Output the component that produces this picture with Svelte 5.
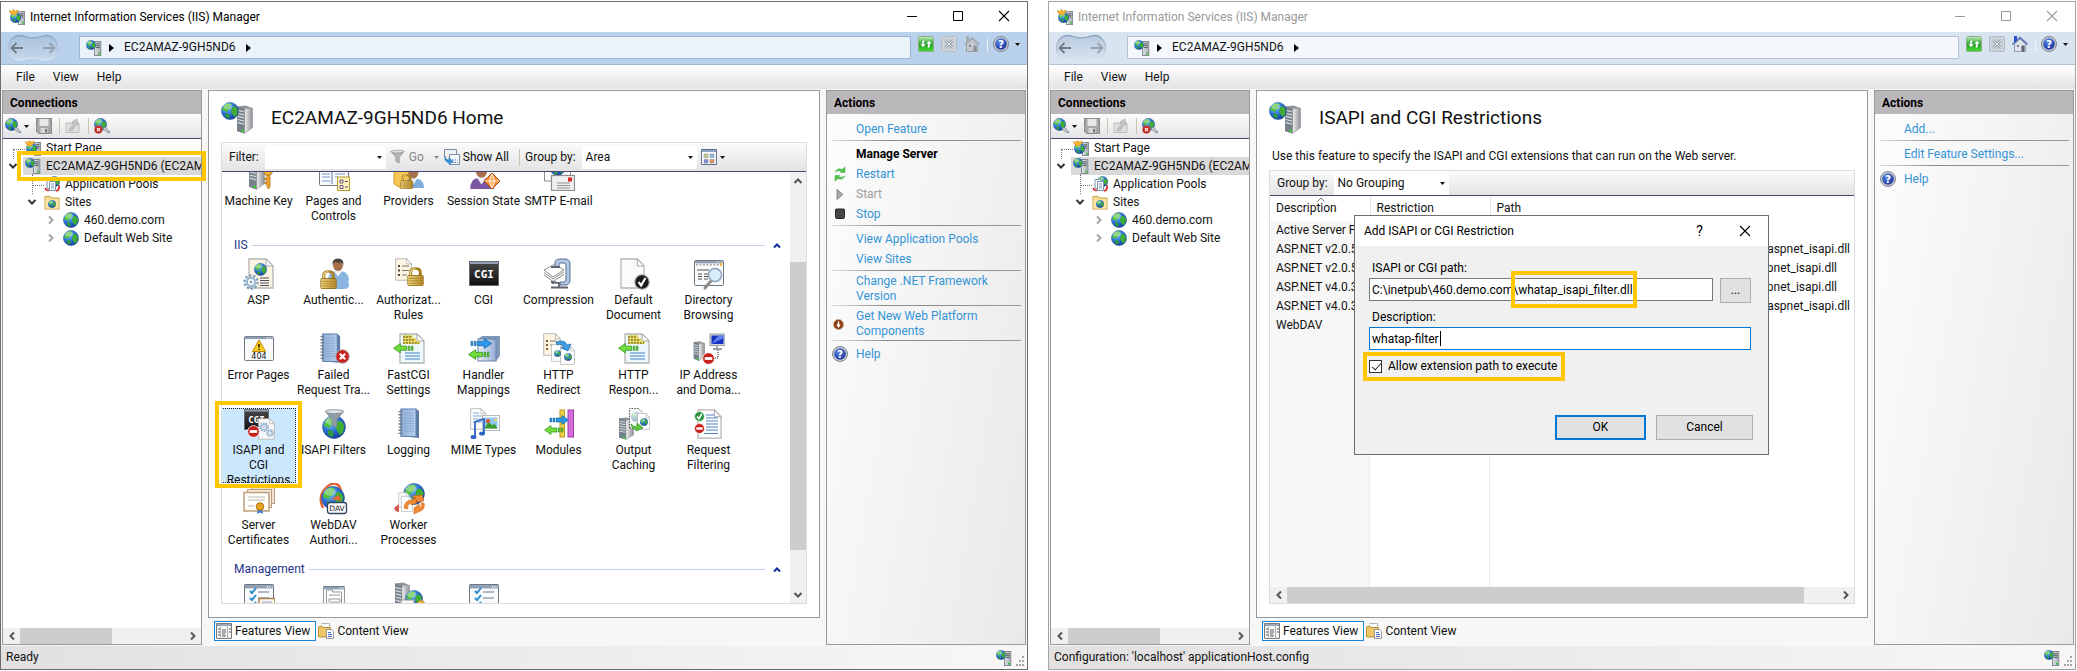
<script>
  const tree = [
    { label: 'Start Page', icon: 'start', level: 0, chev: '', dots: 'corner' },
    { label: 'EC2AMAZ-9GH5ND6 (EC2AMAZ-9GH5ND6\\Administrator)', icon: 'server', level: 0, chev: 'open', active: true },
    { label: 'Application Pools', icon: 'pools', level: 1, chev: '', dots: 'tee' },
    { label: 'Sites', icon: 'folder', level: 1, chev: 'open' },
    { label: '460.demo.com', icon: 'globe', level: 2, chev: 'closed' },
    { label: 'Default Web Site', icon: 'globe', level: 2, chev: 'closed' }
  ];

  const groups = [
    {
      title: '',
      items: [
        ['key', 'Machine Key'], ['pages', 'Pages and\nControls'], ['providers', 'Providers'],
        ['session', 'Session State'], ['smtp', 'SMTP E-mail']
      ]
    },
    {
      title: 'IIS',
      items: [
        ['asp', 'ASP'], ['auth', 'Authentic...'], ['authz', 'Authorizat...\nRules'], ['cgi', 'CGI'],
        ['compress', 'Compression'], ['defdoc', 'Default\nDocument'], ['dir', 'Directory\nBrowsing'],
        ['error', 'Error Pages'], ['failed', 'Failed\nRequest Tra...'], ['fastcgi', 'FastCGI\nSettings'],
        ['handler', 'Handler\nMappings'], ['redirect', 'HTTP\nRedirect'], ['fastcgi', 'HTTP\nRespon...'],
        ['ip', 'IP Address\nand Doma...'],
        ['isapi', 'ISAPI and\nCGI\nRestrictions'], ['filters', 'ISAPI Filters'], ['logging', 'Logging'],
        ['mime', 'MIME Types'], ['modules', 'Modules'], ['cache', 'Output\nCaching'], ['reqfilter', 'Request\nFiltering'],
        ['certs', 'Server\nCertificates'], ['webdav', 'WebDAV\nAuthori...'], ['worker', 'Worker\nProcesses']
      ]
    },
    { title: 'Management', items: [['config', ''], ['editor', ''], ['shared', ''], ['delegation', '']] }
  ];

  const rows = [
    ['Active Server Pages', '', ''],
    ['ASP.NET v2.0.50727', '\\aspnet_isapi.dll', ''],
    ['ASP.NET v2.0.50727', '\\aspnet_isapi.dll', 'short'],
    ['ASP.NET v4.0.30319', '\\aspnet_isapi.dll', 'short'],
    ['ASP.NET v4.0.30319', '\\aspnet_isapi.dll', ''],
    ['WebDAV', '', '']
  ];

  const homeActions = [
    [{ t: 'Open Feature' }],
    [{ t: 'Manage Server', kind: 'head' }, { t: 'Restart', icon: 'restart' }, { t: 'Start', icon: 'play', kind: 'off' }, { t: 'Stop', icon: 'stop' }],
    [{ t: 'View Application Pools' }, { t: 'View Sites' }],
    [{ t: 'Change .NET Framework Version' }],
    [{ t: 'Get New Web Platform Components', icon: 'wpi' }],
    [{ t: 'Help', icon: 'help' }]
  ];
  const cgiActions = [[{ t: 'Add...' }], [{ t: 'Edit Feature Settings...' }], [{ t: 'Help', icon: 'help' }]];

  let path = $state('C:\\inetpub\\460.demo.com\\whatap_isapi_filter.dll');
  let description = $state('whatap-filter');
  let allow = $state(true);
  let filter = $state('');
</script>

<!-- drawing parts -->
{#snippet globe(x, y, s)}
  <svg {x} {y} width={s} height={s} viewBox="0 0 16 16">
    <circle cx="8" cy="8" r="7.6" fill="url(#sea)" stroke="#2a56a0" stroke-width=".5" />
    <path d="M2 4.500Q4 1 8 1L9.500 2.500 8 4 8.500 5.500 6 7 5 9 3.500 8 1.200 7.500z" fill="#4fc03a" />
    <path d="M10.500 4L13.500 4.500 15 7.500 14 11.500 12 13.500 10.500 11 9 9 9.500 6z" fill="#3fae35" />
    <path d="M4 10L7 10.500 8 12.500 6.500 14.800 4 13z" fill="#2f9a3a" />
    <ellipse cx="6" cy="4" rx="4" ry="2.600" fill="#fff" opacity=".35" />
  </svg>
{/snippet}

{#snippet rack(x, y, h)}
  <svg {x} {y} width={h * 0.5} height={h} viewBox="0 0 8 16">
    <rect x=".5" y=".5" width="7" height="15" fill="url(#steel)" stroke="#7d858c" />
    <path d="M2 3h4M2 5h4M2 7h4" stroke="#4f565c" />
    <rect x="4.500" y="12.500" width="2" height="2" fill="#35c42c" />
  </svg>
{/snippet}

{#snippet tower(x, y, w, h)}
  <svg {x} {y} width={w} height={h} viewBox="0 0 16 28" preserveAspectRatio="none">
    <path d="M1 1.500L9 .5 15.500 3V22L8 27.500 1 25z" fill="#8e9499" />
    <path d="M8 3.500L15.500 3V22L8 27.500z" fill="url(#side)" stroke="#9da2a6" stroke-width=".5" />
    <path d="M1 1.500L8 3.500V27.500L1 25z" fill="#75808a" />
    <path d="M1.500 5l6 1.500M1.500 8l6 1.500M1.500 11l6 1.500M1.500 14l6 1.500M1.500 17l6 1.500" stroke="#d5dade" stroke-width="1.200" />
    <path d="M5 23.500l2.500.8v2L5 25.600z" fill="#39d02e" />
  </svg>
{/snippet}

{#snippet doc(x, y, w, h, fill)}
  <svg {x} {y} width={w} height={h} viewBox="0 0 26 31" preserveAspectRatio="none">
    <path d="M1 1h17l7 7v22H1z" {fill} stroke="#b4b4b4" stroke-width="1.300" />
    <path d="M18 1l7 7h-7z" fill="#fff" stroke="#a5a5a5" />
  </svg>
{/snippet}

{#snippet person(x, y, s, coat)}
  <svg {x} {y} width={s} height={s} viewBox="0 0 24 24">
    <path d="M2 23q0-9 7-10h6q8 1 8 10z" fill={coat} />
    <path d="M8 13l4 6 4-6-2-2h-4z" fill="#eef3f8" />
    <ellipse cx="12" cy="7" rx="5" ry="6" fill="#a8714c" />
    <path d="M6.500 7Q6 .5 12 .5T17.500 7L16 4.500Q12 5.500 9 3.500z" fill="#45413f" />
  </svg>
{/snippet}

{#snippet lock(x, y, s)}
  <svg {x} {y} width={s} height={s} viewBox="0 0 16 20" preserveAspectRatio="none">
    <path d="M4 10V5.500Q4 1.500 8 1.500T12 5.500V10" fill="none" stroke="#a98227" stroke-width="2.600" />
    <path d="M4 9V5.500Q4 2 8 1.800" fill="none" stroke="#f4dd92" />
    <rect x="1.500" y="9" width="13" height="10.500" rx="1" fill="url(#gold)" stroke="#8f6a17" stroke-width=".8" />
    <path d="M2.500 12h11M2.500 14.500h11M2.500 17h11" stroke="#a37a1e" stroke-width=".7" />
  </svg>
{/snippet}

{#snippet gear(x, y, s)}
  <svg {x} {y} width={s} height={s} viewBox="0 0 16 16">
    <circle cx="8" cy="8" r="6.600" fill="none" stroke="#7fa0bf" stroke-width="2.400" stroke-dasharray="2.300 1.850" />
    <circle cx="8" cy="8" r="4.200" fill="#fff" stroke="#9fbad2" stroke-width="2.400" />
    <circle cx="8" cy="8" r="1.200" fill="#6f8fb0" />
  </svg>
{/snippet}

{#snippet arrow(x, y, w, right)}
  <svg {x} {y} width={w} height={w / 2} viewBox="0 0 20 10">
    {#if right}
      <path d="M1 3h1.500v4H1zM4 3h1.500v4H4zM7 3h6V.5L19.500 5 13 9.500V7H7z" fill="#2a9ae8" stroke="#1464ae" stroke-width=".7" />
    {:else}
      <path d="M19 3h-1.500v4H19zM16 3h-1.500v4H16zM13 3H7V.5L.5 5 7 9.500V7h6z" fill="#6fdc3c" stroke="#2f8f1c" stroke-width=".7" />
    {/if}
  </svg>
{/snippet}

{#snippet badge(x, y, s, kind)}
  <svg {x} {y} width={s} height={s} viewBox="0 0 14 14">
    <circle cx="7" cy="7" r="6.300" fill={kind === 'ok' ? '#2f9440' : kind === 'tick' ? '#1c1c1c' : '#c9201c'} stroke={kind === 'x' || kind === 'tick' ? '#a8a8a8' : '#ffffff'} stroke-width=".9" />
    {#if kind === 'no'}
      <rect x="3" y="5.500" width="8" height="3" fill="#fff" />
    {:else if kind === 'x'}
      <path d="M4.500 4.500l5 5M9.500 4.500l-5 5" stroke="#fff" stroke-width="2" />
    {:else}
      <path d="M4 7l2.200 3L10 3.500" fill="none" stroke="#fff" stroke-width="1.900" />
    {/if}
  </svg>
{/snippet}

{#snippet frame(x, y, w, h)}
  <svg {x} {y} width={w} height={h} viewBox="0 0 30 26" preserveAspectRatio="none">
    <rect x=".5" y=".5" width="29" height="25" rx="1" fill="#f8fafc" stroke="#6d7681" />
    <path d="M1 2h28" stroke="#8fa0b6" stroke-width="2.400" />
    <path d="M23 2h1M25.500 2h1M28 2h.7" stroke="#fff" stroke-width="1.200" />
  </svg>
{/snippet}

{#snippet notebook(x, y, w, h)}
  <svg {x} {y} width={w} height={h} viewBox="0 0 23 30" preserveAspectRatio="none">
    <path d="M2.500 1H18l3 2v26L2.500 27z" fill="#5b7aa6" />
    <path d="M3 1h15v26.500H3z" fill="url(#note)" stroke="#5f7fab" />
    <path d="M6 5h10M6 7.500h10M6 10h10M6 12.500h10M6 15h10M6 17.500h10M6 20h10M6 22.500h10" stroke="#86a4cc" stroke-width=".8" />
    <path d="M.5 3.500h4M.5 6.500h4M.5 9.500h4M.5 12.500h4M.5 15.500h4M.5 18.500h4M.5 21.500h4M.5 24.500h4" stroke="#6f7c8c" stroke-width="1.300" />
  </svg>
{/snippet}

{#snippet funnel(x, y, s, c)}
  <svg {x} {y} width={s} height={s} viewBox="0 0 16 16">
    <path d="M1 2.500h14L9.800 9v6L6.200 13V9z" fill={c} stroke="#77828a" stroke-width=".6" />
    <ellipse cx="8" cy="2.800" rx="7" ry="1.500" fill="#dfe4e8" stroke="#77828a" stroke-width=".6" />
  </svg>
{/snippet}

{#snippet cgiBox(x, y, w, h)}
  <svg {x} {y} width={w} height={h} viewBox="0 0 30 25">
    <rect x=".5" y=".5" width="29" height="24" fill="url(#ink)" stroke="#626b76" />
    <path d="M1 2h28" stroke="#93a1b2" stroke-width="2" />
    <text x="15" y="17" text-anchor="middle" class="mono" font-size="11" fill="#fff">CGI</text>
  </svg>
{/snippet}

{#snippet feature(name)}
  <svg class="ico32" viewBox="0 0 32 32" aria-hidden="true">
    {#if name === 'key'}
      {@render tower(5, 1, 17, 30)}
      <circle cx="25" cy="12" r="4.500" fill="#f5b73c" stroke="#a86f11" />
      <path d="M24 16h3v12l-1.500 2-1.500-2v-3h-2v-2h2v-2h-2v-2h2z" fill="#f0a52c" stroke="#a86f11" stroke-width=".7" />
    {:else if name === 'pages'}
      {@render frame(1, 2, 30, 25)}
      <path d="M4 15h8M4 18h8M4 22h8M17 15h10M17 18h3" stroke="#7c98cc" stroke-width="1.200" />
      <path d="M14 5v20" stroke="#5d7ab4" />
      <rect x="19.500" y="18" width="12" height="13.500" fill="#fdf3b8" stroke="#b59a35" />
      <path d="M22 21h3v3h-3zM22 26.500h3v3h-3z" fill="none" stroke="#66548f" /><path d="M27 22.500h3M27 28h3" stroke="#66548f" />
    {:else if name === 'providers'}
      <path d="M1 2h15v26H6l-5-3z" fill="#f7c655" stroke="#d19a28" />
      {@render person(9, 7, 23, '#7faede')}
      {@render lock(6, 15, 15)}
    {:else if name === 'session'}
      {@render person(0, 4, 27, '#7b56a4')}
      <path d="M24 14l8 8-8 8-8-8z" fill="#f58b2e" stroke="#b84d0c" /><path d="M24 15l3 7-3 7-3-7zM17 22h14" fill="#fbb566" stroke="#fff" stroke-width=".8" />
    {:else if name === 'smtp'}
      <path d="M1.500 4v18h8M1.500 4h26v12" fill="none" stroke="#8d8d8d" />
      {@render globe(7, 2, 15)}
      <rect x="8.500" y="16.500" width="23" height="15" fill="#f0f0f0" stroke="#8c8c8c" stroke-width="1.200" />
      <rect x="25" y="18.500" width="4" height="4" fill="#e02424" /><path d="M14 24h13M14 26.500h13M14 29h13" stroke="#909090" />
    {:else if name === 'asp'}
      {@render doc(5, 0, 26, 31, '#fdf5e2')}
      {@render globe(11, 5, 13)}
      {@render gear(0, 16, 16)}
      <path d="M17 20h9M17 22.500h9M17 25h9M17 27.500h9" stroke="#4d4d68" stroke-width="1.200" />
    {:else if name === 'auth'}
      {@render person(8, 0, 24, '#8ab5e2')}
      <path d="M10 31q0-12 9-13h3q9 1 9 9 0 4-5 4z" fill="#8ab5e2" />
      {@render lock(1, 12, 19)}
    {:else if name === 'authz'}
      {@render doc(2, 0, 17, 23, '#fdf5e2')}
      <path d="M5 8h2M5 12.500h2M5 17h2" stroke="#444" stroke-width="2" /><path d="M9 8h7M9 12.500h7M9 17h5" stroke="#777" />
      {@render lock(13, 9, 19)}
    {:else if name === 'cgi'}
      {@render cgiBox(1, 3, 30, 25)}
    {:else if name === 'compress'}
      <path d="M1 12l11-6 9 6-11 7z" fill="#fdfdfd" stroke="#8a8a8a" /><path d="M1 14.500l9 6.500 11-7M1 17l9 6.500 11-7" fill="none" stroke="#8a8a8a" />
      <path d="M12 9V5q0-4 5-4h5q5 0 5 5v16q0 5-5 5h-5v-3h4q2 0 2-3V7q0-2-2-2h-4q-1 0-1 2v2z" fill="#b4c7e4" stroke="#5c6f8e" />
      <path d="M8 9h9M8 24l8 1v5M8 29.500h17M10 23v3" fill="none" stroke="#5b6470" stroke-width="1.800" />
    {:else if name === 'defdoc'}
      {@render doc(2, 0, 25, 31, '#fbfbfb')}
      {@render badge(16, 16, 16, 'tick')}
    {:else if name === 'dir'}
      {@render frame(1, 2, 30, 26)}
      <path d="M3 6.500h26" stroke="#a9a9a9" stroke-width="2" stroke-dasharray="2 1.500" /><path d="M27 5h2v3h-2z" fill="#f3b63c" />
      <path d="M4 12h12M5 16h4M11 16h5M5 18.500h4M11 18.500h5M5 21h4M11 21h4" stroke="#4e4e4e" stroke-width="1.100" />
      <path d="M18 23l-6 7" stroke="#8b8b8b" stroke-width="3" stroke-linecap="round" /><circle cx="22" cy="17" r="6.500" fill="#d8eefc" stroke="#8ea4b8" stroke-width="1.500" />
    {:else if name === 'error'}
      {@render frame(1, 3, 30, 25)}
      <path d="M16 7l6.500 11.500h-13z" fill="#ffcc24" stroke="#c38a00" stroke-linejoin="round" /><path d="M16 11v3.500M16 15.800v1.300" stroke="#2a2200" stroke-width="1.600" />
      <text x="16" y="26" text-anchor="middle" class="sans" font-size="8" fill="#111">404</text>
    {:else if name === 'failed'}
      {@render notebook(2, 0, 22, 31)}
      {@render badge(17, 16, 15, 'x')}
    {:else if name === 'fastcgi'}
      {@render doc(6, 0, 26, 31, '#eef8fc')}
      <path d="M10 3.500h10M10 6.500h13M10 9.500h17" stroke="#e7d03e" stroke-width="2.600" /><path d="M10 4h9M10 7h12M10 10h16" stroke="#55501c" stroke-dasharray="2 1" />
      {@render arrow(0, 10, 21, false)}
      <path d="M12 20h15M12 23h15M12 26h15" stroke="#3f83c7" stroke-width="1.200" />
    {:else if name === 'handler'}
      <path d="M10 6l4-3h18v20l-4 5H10z" fill="#8198bc" /><rect x="10" y="6" width="18" height="22" fill="url(#box)" stroke="#6982aa" />
      {@render arrow(2, 5, 22, true)}
      {@render arrow(0, 16, 22, false)}
    {:else if name === 'redirect'}
      {@render doc(0, 0, 18, 23, '#fdf5e2')}
      <path d="M3 8h2M3 12h2M3 16h2" stroke="#8a5a20" stroke-width="2" /><path d="M7 8h6M7 12h4" stroke="#777" />
      {@render doc(8, 11, 14, 18, '#fff')}
      {@render doc(17, 13, 15, 19, '#fff')}
      {@render globe(11, 17, 7)}
      {@render globe(21, 20, 8)}
      <path d="M13 9q9-3 11 3l4-1-3 7-7-3 3-1q-2-4-7-2z" fill="#3da0e4" stroke="#1d67ab" stroke-width=".7" />
    {:else if name === 'ip'}
      {@render tower(0, 8, 12, 20)}
      <rect x="17" y="1" width="15" height="11.500" fill="#d3d6d8" stroke="#9a9fa3" /><rect x="18.500" y="2.500" width="12" height="8.500" fill="#1931c4" /><path d="M18.500 11l7-8.500h5V5z" fill="#5d86ee" /><path d="M24 13v2.500M20 16h9" stroke="#9a9fa3" stroke-width="1.800" />
      <path d="M25 17v8h-4" fill="none" stroke="#222" stroke-dasharray="1 1" />
      {@render badge(9, 19, 13, 'no')}
    {:else if name === 'isapi'}
      {@render cgiBox(1, 1, 25, 21)}
      {@render doc(15, 10, 17, 22, '#f8f8fb')}
      {@render gear(16, 14, 10)}
      {@render gear(23, 21, 8)}
      {@render badge(4, 17, 13, 'no')}
    {:else if name === 'filters'}
      {@render globe(4, 7, 24)}
      {@render funnel(6, 0, 21, '#909ca4')}
    {:else if name === 'logging'}
      {@render notebook(5, 0, 23, 31)}
    {:else if name === 'mime'}
      {@render doc(2, 0, 16, 22, '#fdfdff')}
      <path d="M5 5h6M5 8h9M5 11h9M5 14h9" stroke="#7fa8d8" />
      <rect x="14.500" y="7.500" width="17" height="15" fill="#fff" stroke="#b9b9b9" /><rect x="16.500" y="9.500" width="13" height="11" fill="#8cc8f4" /><path d="M16.500 20.500l4-7 4 4 2-2 3 5z" fill="#3b9d2d" /><circle cx="20" cy="13" r="2" fill="#e0502b" /><path d="M26 11h3v2h-3z" fill="#f7d04c" />
      <path d="M7 29V14l9-3v14" fill="none" stroke="#2f66c4" stroke-width="1.800" /><ellipse cx="5.500" cy="29" rx="3" ry="2" fill="#2f66c4" /><ellipse cx="14" cy="25.500" rx="3" ry="2" fill="#2f66c4" />
    {:else if name === 'modules'}
      <rect x="17" y="2" width="4.500" height="27" fill="#f0d24c" stroke="#b99a1d" /><rect x="25" y="2" width="5.500" height="27" fill="#d76cdc" stroke="#9c3da4" />
      {@render arrow(6, 7, 20, true)}
      {@render arrow(1, 17, 20, false)}
    {:else if name === 'cache'}
      {@render tower(0, 9, 16, 23)}
      <path d="M11.500 20V.5h9l5 5v14z" fill="#fafafa" stroke="#555" stroke-dasharray="1.500 1.200" />
      <g opacity=".4">{@render globe(13, 4, 10)}</g>
      {@render doc(19, 5, 13, 17, '#fdfdfd')}
      {@render globe(22, 10, 8)}
      <path d="M13 16q3 4 6 2v-3l6 5-7 3v-2q-4 1-5-5z" fill="#5fcb3c" stroke="#2c8a1d" stroke-width=".7" />
    {:else if name === 'reqfilter'}
      {@render doc(4, 1, 25, 30, '#fdfdff')}
      <path d="M13 7h8M13 10h12M13 13h12M13 16h12M13 19h12M13 22h12M11 25.500h14" stroke="#4f84c4" stroke-width="1.100" />
      {@render badge(1, 3, 11, 'ok')}
      {@render badge(1, 15, 11, 'no')}
    {:else if name === 'certs'}
      <rect x="8.500" y="3.500" width="23" height="17" fill="#efe2cf" stroke="#b59c7c" /><rect x="4.500" y="6.500" width="24" height="18" fill="#f5ebdc" stroke="#b59c7c" />
      <rect x="1" y="9.500" width="25" height="18.500" fill="#fffdf8" stroke="#c0a582" stroke-width="1.600" /><path d="M5 14h17M5 17h17M5 23h6" stroke="#b9b9b9" />
      <path d="M15 25l-1 6 3-1.500 3 1.500-1-6z" fill="#3d7fd8" /><circle cx="17" cy="23.500" r="3.800" fill="#e8a31f" stroke="#a97411" />
    {:else if name === 'webdav'}
      <path d="M5 25Q-2 10 13 1q9-2 10 8" fill="none" stroke="#e2683a" stroke-width="2.600" />
      {@render globe(3, 3, 24)}
      <path d="M13 16l8-4 2 6z" fill="#e2683a" />
      <rect x="9.500" y="19.500" width="19" height="11" rx="2.500" fill="#fff" stroke="#2e4560" stroke-width="1.300" />
      <text x="19" y="28" text-anchor="middle" class="sans" font-size="7.500" fill="#111">DAV</text>
    {:else if name === 'worker'}
      {@render globe(10, 0, 22)}
      {@render doc(5, 9, 12, 16, '#f4f4f4')}
      {@render doc(8, 13, 12, 16, '#fff')}
      <path d="M1 25l5-4v8q-4 0-5-4z" fill="#d4564f" />
      <path d="M11 25q1-9 9-8l2-3 2 6-6 2v-2q-4 1-3 6zM19 13l10-1 2 6-6 1zM31 20q2 7-6 9l-4 2v-6l5-4 1 4q2-2 1-5z" fill="#ef8a32" stroke="#c05a13" stroke-width=".5" />
    {:else if name === 'config' || name === 'delegation'}
      {@render frame(1, 2, 30, 36)}
      <path d="M7 9l2 2 4-5M7 16l2 2 4-5M7 23l2 2 4-5" fill="none" stroke="#2a8ccc" stroke-width="2" /><path d="M15 10h11M15 16h11M15 22h11" stroke="#6f7391" />
      {#if name === 'config'}<rect x="16" y="16.500" width="16" height="14" fill="#fffaf0" stroke="#a8824f" stroke-width="1.500" /><path d="M19 20h10M19 23h10" stroke="#9a9ad0" />{/if}
    {:else if name === 'editor'}
      {@render frame(5, 4, 22, 28)}
      <path d="M8.500 9v-1h6v2h9v20h-15z" fill="#fff" stroke="#999" /><path d="M11 13h11M11 17h11v3H11zM14 25h8" fill="none" stroke="#999" /><path d="M10.500 24h2v2h-2z" fill="#24b0d8" />
    {:else if name === 'shared'}
      {@render tower(1, 0, 16, 30)}
      {@render globe(12, 8, 18)}
      <rect x="8" y="18" width="13" height="12" fill="#f8f8f8" stroke="#999" />
      <circle cx="28" cy="22" r="3.500" fill="#eebf4c" stroke="#b28b26" />
    {/if}
  </svg>
{/snippet}

{#snippet small(name, off)}
  <svg class="ico16" viewBox="0 0 16 16" aria-hidden="true">
    {#if name === 'start'}
      {@render rack(9, 2, 14)}
      {@render globe(1, 3, 11)}
      <path d="M0 1.500l3 1 1.500-2.300L6 2.300 9 1 8 4.500 5.500 6 2 5z" fill="#f7b52c" stroke="#d08a10" stroke-width=".5" />
    {:else if name === 'server'}
      {@render rack(8, 1, 15)}
      {@render globe(0, 0, 10)}
    {:else if name === 'pools'}
      {@render globe(5, 0, 11)}
      <path d="M3 3.500h6v9H3z" fill="#fff" stroke="#7a94b4" /><path d="M5.500 5.500h6v9h-6z" fill="#fff" stroke="#7a94b4" /><path d="M7 8h3M7 10h3M7 12h3" stroke="#7a94b4" /><path d="M1 12q2 3.500 4 2M15 9q1 5-3 6" fill="none" stroke="#d33a33" stroke-width="1.800" />
    {:else if name === 'folder'}
      <path d="M1 2.500h5l1 1.500h8v11H1z" fill="#f9dc8c" stroke="#c69f42" /><path d="M1.500 5.500h13v9h-13z" fill="#fbe6a8" />
      {@render globe(4, 6, 8)}
    {:else if name === 'globe'}
      {@render globe(0, 0, 16)}
    {:else if name === 'connect' || name === 'disconnect'}
      {@render globe(0, 0, 13)}
      <path d="M9 11l2-2 4 4 1 2-3-1z" fill="#c9d2da" stroke="#71808c" stroke-width=".8" />
      {#if name === 'disconnect'}{@render badge(0, 7, 9, 'x')}{/if}
    {:else if name === 'save'}
      <path d="M.5.5h15v15h-13l-2-2z" fill="#a6a6a6" stroke="#8a8a8a" /><path d="M3.500 1h9v7h-9z" fill="#e8e8e8" /><path d="M4.500 10h7v5h-7z" fill="#d8d8d8" /><path d="M9 11h2v3.500H9z" fill="#777" />
    {:else if name === 'up'}
      <path d="M1 5h13v9.500H1z" fill="#dedede" stroke="#bdbdbd" /><path d="M4 12l5-7-2-1 5-3 1 6-2-1-4 7z" fill="#c6c6c6" stroke="#a5a5a5" stroke-width=".6" />
    {:else if name === 'refresh'}
      <rect x=".5" y=".5" width="15" height="15" rx="1" fill="url(#lime)" stroke="#8fae8a" /><path d="M6.800 2.500L4 5.500V8H2l3 3.500L8 8H6zM9.200 13.500L12 10.500V8h2l-3-3.500L8 8h2z" fill="#fff" stroke="#0d6f17" stroke-width=".3" />
    {:else if name === 'cancel'}
      <rect x=".5" y=".5" width="15" height="15" rx="1" fill="#ccd3da" stroke="#b4bcc4" /><path d="M4 4l8 8M12 4l-8 8" stroke="#9aa3ab" stroke-width="2.500" /><path d="M4 4l8 8M12 4l-8 8" stroke="#e6eaee" />
    {:else if name === 'home'}
      <path d="M2.500 8v7.500h11V8L8 3z" fill={off ? '#c3c8cd' : '#dfe3ea'} stroke="#979da6" /><path d="M.5 8.500L8 1.500l7.500 7" fill="none" stroke={off ? '#a7adb4' : '#5a74b8'} stroke-width="1.600" /><path d="M2 0h3v4.500L2 7z" fill={off ? '#a7adb4' : '#2d4fc8'} /><path d="M5 9h2v2H5z" fill="#7c8390" /><path d="M9.500 9.500h3v6h-3z" fill={off ? '#8b9199' : '#5b6272'} />
    {:else if name === 'help'}
      <circle cx="8" cy="8" r="7.500" fill="#c9cdd3" stroke="#7f858f" /><circle cx="8" cy="8" r="5.800" fill="url(#navy)" /><text x="8" y="11.800" text-anchor="middle" class="sans" font-weight="700" font-size="10.500" fill="#fff">?</text>
    {:else if name === 'restart'}
      <path d="M3 6q3-5 7-2.500L13 1v5.500H8L9.500 5Q6 4 3 6z" fill="#4fc545" stroke="#2e9a2c" stroke-width=".4" /><path d="M13 10q-3 5-7 2.500L3 15V9.500h5L6.500 11q3.500 1 6.500-1z" fill="#4fc545" stroke="#2e9a2c" stroke-width=".4" />
    {:else if name === 'play'}
      <path d="M5 3.500l6 5-6 5z" fill="#a9a9a9" stroke="#8b8b8b" />
    {:else if name === 'stop'}
      <rect x="3.500" y="3" width="9" height="9.500" rx="1" fill="#454545" stroke="#2a2a2a" />
    {:else if name === 'wpi'}
      <circle cx="6.500" cy="8.500" r="5" fill="#8a3a0c" stroke="#c9a78e" /><path d="M6.500 4.500q1 2 .8 4h1.500l-2.300 3.500L4.200 8.500h1.500q-.2-2 .8-4z" fill="#fff" />
    {:else if name === 'show'}
      <path d="M.5 2.500v-2h12v5" fill="#eef3fa" stroke="#7c8ba0" /><path d="M.5 1v7" stroke="#7c8ba0" /><path d="M5.500 5.500h10v10h-10z" fill="#f5f8fc" stroke="#7c8ba0" /><path d="M8 11h5.500M8 13.500h5.500" stroke="#5b79b8" stroke-dasharray="1.500 1" /><path d="M1 7q0 4 4 4V8.500l4 4-4 3v-2Q0 13 1 7z" fill="#2f96dc" stroke="#1763a0" stroke-width=".5" />
    {:else if name === 'tiles'}
      <path d="M.5.5h15v15H.5z" fill="#fdfdfd" stroke="#5f7088" /><path d="M1 2h14" stroke="#8da5c4" stroke-width="2" /><path d="M3 5h4v3.500H3z" fill="#c7d28a" stroke="#888" stroke-width=".6" /><path d="M9 5h4v3.500H9z" fill="#8cc1ea" stroke="#888" stroke-width=".6" /><path d="M3 10.500h4V14H3z" fill="#7d8be0" stroke="#888" stroke-width=".6" /><path d="M9 10.500h4V14H9z" fill="#f0945c" stroke="#888" stroke-width=".6" />
    {:else if name === 'fview'}
      <path d="M.5.5h15v15H.5z" fill="#f5f5f5" stroke="#7a7a7a" /><path d="M1 2h14" stroke="#9aa8b8" stroke-width="2" /><path d="M4.500 3.500v12M11.500 3.500v12" stroke="#b0b0b0" /><path d="M2 6h2M2 9h2M2 12h2M6 7h4M6 9h4M6 11h3M6 13h4M13 6h2M13 9h2" stroke="#55606c" />
    {:else if name === 'cview'}
      <path d="M3.500.5h8v5" fill="#fff" stroke="#b5b5b5" /><path d="M.5 14V4l3-1 2 1.500h7V14z" fill="#edc667" stroke="#bd923a" /><path d="M8.500 6.500h5l2 2v7h-7z" fill="#fff" stroke="#9a9a9a" /><path d="M10 9.500h3M10 11.500h4M10 13.500h4" stroke="#3f74c4" />
    {/if}
  </svg>
{/snippet}

{#snippet caret()}
  <svg class="caret" viewBox="0 0 5 3" aria-hidden="true"><path d="M0 0h5L2.500 3z" fill="currentColor" /></svg>
{/snippet}

{#snippet bread()}
  <svg class="bread" viewBox="0 0 5 8" aria-hidden="true"><path d="M0 0l5 4-5 4z" fill="#000" /></svg>
{/snippet}

{#snippet chevron(dir)}
  <svg class="chev" viewBox="0 0 10 10" aria-hidden="true">
    <path d={{ left: 'M7 1.500L3.500 5 7 8.500', right: 'M3 1.500L6.500 5 3 8.500', up: 'M1.500 7L5 3.500 8.500 7', down: 'M1.500 3L5 6.500 8.500 3' }[dir]} fill="none" stroke="currentColor" stroke-width="2" />
  </svg>
{/snippet}

{#snippet scrollbar(cls, before, after)}
  <div class={['bar', cls]}>
    <button aria-label="Scroll back">{@render chevron(before)}</button>
    <div class="track"><div class="thumb"></div></div>
    <button aria-label="Scroll forward">{@render chevron(after)}</button>
  </div>
{/snippet}

{#snippet bigServer()}
  <svg class="big" viewBox="0 0 32 32" aria-hidden="true">
    {@render tower(15, 3, 17, 29)}
    {@render globe(0, 0, 18)}
  </svg>
{/snippet}

{#snippet shell(title, actions, status, inactive, marked, content)}
  <section class="window" class:inactive>
    <header class="titlebar">
      {@render small('start')}
      <span class="caption">Internet Information Services (IIS) Manager</span>
      <button aria-label="Minimize"><svg viewBox="0 0 10 10"><path d="M0 5.500h10" stroke="currentColor" /></svg></button>
      <button aria-label="Maximize"><svg viewBox="0 0 10 10"><path d="M.5.5h9v9h-9z" fill="none" stroke="currentColor" /></svg></button>
      <button aria-label="Close"><svg viewBox="0 0 10 10"><path d="M0 0l10 10M10 0L0 10" stroke="currentColor" stroke-width="1.100" /></svg></button>
    </header>

    <div class="nav">
      <svg class="travel" viewBox="0 0 56 28" aria-hidden="true">
        <path d="M13 1.500C20 1.500 22 4 28 4S38 1.500 43 1.500A12 12.500 0 0 1 43 26C37 26 34 24 28 24S20 26 13 26A12 12.500 0 0 1 13 1.500z" fill="url(#pill)" fill-opacity=".45" stroke="url(#rim)" stroke-width="1.400" />
        <path d="M18 14H7M11.500 9L6.500 14l5 5" fill="none" stroke="#6f7a86" stroke-width="1.800" />
        <path d="M38 14h11M44.500 9l5 5-5 5" fill="none" stroke="#95a1ae" stroke-width="1.800" />
      </svg>
      <div class="address">
        {@render small('server')}{@render bread()}<span>EC2AMAZ-9GH5ND6</span>{@render bread()}
      </div>
      <div class="tools">
        <button aria-label="Refresh">{@render small('refresh')}</button>
        <button aria-label="Cancel">{@render small('cancel')}</button>
        <button aria-label="Home">{@render small('home', !inactive)}</button>
        <i></i>
        <button aria-label="Help menu">{@render small('help')}{@render caret()}</button>
      </div>
    </div>

    <nav class="menu"><button>File</button><button>View</button><button>Help</button></nav>

    <div class="body">
      <aside class="panel connections">
        <h2>Connections</h2>
        <div class="ctools">
          <button aria-label="Connect">{@render small('connect')}{@render caret()}</button>
          <button aria-label="Save">{@render small('save')}</button><i></i>
          <button aria-label="Up">{@render small('up')}</button><i></i>
          <button aria-label="Disconnect">{@render small('disconnect')}</button>
        </div>
        <ul class="tree">
          {#each tree as n}
            <li class="l{n.level}">
              <span class={['twist', n.chev, n.dots]}>
                {#if n.chev}{@render chevron(n.chev === 'open' ? 'down' : 'right')}{/if}
              </span>
              <span class="node" class:active={n.active}>{@render small(n.icon)}<span class="name">{n.label}</span></span>
              {#if n.active && marked}<span class="mark treemark"></span>{/if}
            </li>
          {/each}
        </ul>
        {@render scrollbar('h tbar', 'left', 'right')}
      </aside>

      <div class="centre">
        <main class="panel page">
          <div class="heading">{@render bigServer()}<h1>{title}</h1></div>
          {@render content()}
        </main>
        <div class="tabs">
          <button class="on">{@render small('fview')}Features View</button>
          <button>{@render small('cview')}Content View</button>
        </div>
      </div>

      <aside class="panel actions">
        <h2>Actions</h2>
        <div class="alist">
          {#each actions as sec, i}
            {#if i}<hr />{/if}
            {#each sec as a}
              <div class={['act', a.kind]}>
                <span class="aicon">{#if a.icon}{@render small(a.icon)}{/if}</span>
                {#if a.kind}<span>{a.t}</span>{:else}<a href="#top">{a.t}</a>{/if}
              </div>
            {/each}
          {/each}
        </div>
      </aside>
    </div>

    <footer class="status">
      <span>{status}</span>
      {@render small('server')}
      <svg class="grip" viewBox="0 0 10 10" aria-hidden="true"><path d="M7 0h2v2H7zM4 4h2v2H4zM7 4h2v2H7zM1 8h2v2H1zM4 8h2v2H4zM7 8h2v2H7z" fill="#a5a5a5" /></svg>
    </footer>
  </section>
{/snippet}

{#snippet homeContent()}
  <div class="box">
    <div class="strip">
      <label for="filter">Filter:</label>
      <span class="combo wide"><input id="filter" bind:value={filter} />{@render caret()}</span>
      <button class="dim go"><svg class="ico16" viewBox="0 0 16 16" aria-hidden="true">{@render funnel(0, 0, 15, '#b5b5b5')}</svg>Go{@render caret()}</button>
      <button>{@render small('show')}Show All</button>
      <i></i>
      <label for="group">Group by:</label>
      <span class="combo"><select id="group"><option>Area</option></select>{@render caret()}</span>
      <button aria-label="View mode">{@render small('tiles')}{@render caret()}</button>
    </div>
    <div class="scroller">
      <div class="clip">
        <div class="features">
          {#each groups as g}
            {#if g.title}
              <h3><span>{g.title}</span><svg class="fold" viewBox="0 0 8 5" aria-hidden="true"><path d="M1 4.500L4 1.500l3 3" fill="none" stroke="#102f9c" stroke-width="2" /></svg></h3>
            {/if}
            <div class="grid">
              {#each g.items as [icon, label]}
                <div class="item" class:picked={icon === 'isapi'}>
                  {@render feature(icon)}
                  <span class="label">{label}</span>
                </div>
              {/each}
            </div>
          {/each}
        </div>
      </div>
      {@render scrollbar('v', 'up', 'down')}
      <span class="mark itemmark"></span>
    </div>
  </div>
{/snippet}

{#snippet cgiContent()}
  <p class="intro">Use this feature to specify the ISAPI and CGI extensions that can run on the Web server.</p>
  <div class="box">
    <div class="strip low">
      <label for="grouping">Group by:</label>
      <span class="combo"><select id="grouping"><option>No Grouping</option></select>{@render caret()}</span>
    </div>
    <div class="tablearea">
      <table>
        <thead><tr><th class="c1">Description</th><th class="c2">Restriction</th><th>Path</th></tr></thead>
        <tbody>
          {#each rows as [d, p, cls]}
            <tr><td>{d}</td><td></td><td class={['path', cls]}>{p}</td></tr>
          {/each}
        </tbody>
      </table>
      <svg class="sort" viewBox="0 0 8 5" aria-hidden="true"><path d="M.5 4.500L4 1l3.500 3.500" fill="none" stroke="#777" /></svg>
    </div>
    {@render scrollbar('h lbar', 'left', 'right')}
  </div>
{/snippet}

<svg class="defs" aria-hidden="true">
  <defs>
    <radialGradient id="sea" cx=".35" cy=".3" r=".8"><stop offset="0" stop-color="#7cc4f8" /><stop offset=".5" stop-color="#2b72d6" /><stop offset="1" stop-color="#0d2f8c" /></radialGradient>
    <radialGradient id="navy" cx=".4" cy=".3" r=".8"><stop offset="0" stop-color="#5d8af0" /><stop offset="1" stop-color="#10288c" /></radialGradient>
    <linearGradient id="steel"><stop offset="0" stop-color="#e4e7ea" /><stop offset="1" stop-color="#a3aab0" /></linearGradient>
    <linearGradient id="side"><stop offset="0" stop-color="#f0f0f0" /><stop offset="1" stop-color="#8b8f93" /></linearGradient>
    <linearGradient id="gold"><stop offset="0" stop-color="#f3da88" /><stop offset="1" stop-color="#b98c2b" /></linearGradient>
    <linearGradient id="note"><stop offset="0" stop-color="#8eadd6" /><stop offset="1" stop-color="#b6cfec" /></linearGradient>
    <linearGradient id="box"><stop offset="0" stop-color="#e9eff8" /><stop offset="1" stop-color="#93add4" /></linearGradient>
    <linearGradient id="ink" x2="0" y2="1"><stop offset="0" stop-color="#4a4a4a" /><stop offset="1" stop-color="#101010" /></linearGradient>
    <linearGradient id="lime" x2="0" y2="1"><stop offset="0" stop-color="#c8ecc0" /><stop offset=".5" stop-color="#25a827" /><stop offset="1" stop-color="#3fdc2e" /></linearGradient>
    <linearGradient id="pill" x2="0" y2="1"><stop offset="0" stop-color="#93acc9" /><stop offset="1" stop-color="#d5e1ee" /></linearGradient>
    <linearGradient id="rim" x2="0" y2="1"><stop offset="0" stop-color="#8fa5bf" /><stop offset=".6" stop-color="#b4c7dc" /><stop offset="1" stop-color="#dbe7f3" /></linearGradient>
  </defs>
</svg>

<div class="desk" id="top">
  {@render shell('EC2AMAZ-9GH5ND6 Home', homeActions, 'Ready', false, true, homeContent)}
  <div class="second">
    {@render shell('ISAPI and CGI Restrictions', cgiActions, "Configuration: 'localhost' applicationHost.config", true, false, cgiContent)}

    <form class="dialog" aria-label="Add ISAPI or CGI Restriction" onsubmit={(e) => e.preventDefault()}>
      <header>
        <span>Add ISAPI or CGI Restriction</span>
        <button type="button" class="q">?</button>
        <button type="button" aria-label="Close dialog"><svg viewBox="0 0 10 10"><path d="M0 0l10 10M10 0L0 10" stroke="currentColor" stroke-width="1.100" /></svg></button>
      </header>
      <div class="fields">
        <label for="path">ISAPI or CGI path:</label>
        <div class="line">
          <input id="path" bind:value={path} />
          <button type="button" class="push more">...</button>
          <span class="mark pathmark"></span>
        </div>
        <label for="desc">Description:</label>
        <div class="line"><input id="desc" class="focus" bind:value={description} /><span class="cursor"></span></div>
        <div class="check">
          <input id="allow" type="checkbox" bind:checked={allow} />
          <label for="allow">Allow extension path to execute</label>
          <span class="mark checkmark"></span>
        </div>
        <div class="buttons"><button class="push ok">OK</button><button type="button" class="push cancel">Cancel</button></div>
      </div>
    </form>
  </div>
</div>

<style>
  :global(body) { background: #fff; }
  * { box-sizing: border-box; }
  .desk {
    display: grid; grid-template-columns: 1fr 1fr; gap: 20px; height: 100vh; padding: 1px 1px 1px 0;
    font: 12px/15px Roboto, "Open Sans", sans-serif; color: #111;
  }
  .second { position: relative; display: grid; min-width: 0; }
  .defs { position: absolute; width: 0; height: 0; }
  button, input, select { font: inherit; color: inherit; margin: 0; padding: 0; border: 0; background: none; }
  svg { display: block; flex: none; }
  h1, h2, h3, p, ul { margin: 0; padding: 0; font-weight: 400; }
  .ico16 { width: 16px; height: 16px; }
  .ico32 { width: 32px; height: 32px; }
  .caret { width: 5px; height: 3px; }
  .bread { width: 5px; height: 8px; }
  .chev { width: 10px; height: 10px; }
  .mono { font-family: "DejaVu Sans Mono", monospace; font-weight: 700; }
  .sans { font-family: "DejaVu Sans", sans-serif; }
  .mark { position: absolute; border: 4px solid #ffc700; pointer-events: none; z-index: 3; }

  .window { display: flex; flex-direction: column; min-width: 0; min-height: 0; border: 1px solid #6d6d6d; background: #f7f7f7; }
  .window.inactive { border-color: #a3a3a3; }
  .titlebar { display: flex; align-items: center; height: 30px; padding-left: 8px; background: #fff; flex: none; }
  .caption { flex: 1; padding-left: 5px; color: #000; }
  .titlebar button { display: flex; align-items: center; justify-content: center; width: 46px; height: 28px; margin-bottom: 2px; color: #000; }
  .titlebar button svg, .dialog header svg { width: 10px; height: 10px; overflow: visible; }
  .inactive .caption, .inactive .titlebar button { color: #999; }

  .nav { display: flex; align-items: flex-start; height: 33px; flex: none; padding: 4px 7px 0 4px; background: #b9d1ea; border-bottom: 1px solid #9fbbd8; }
  .inactive .nav { background: #d9e4f1; border-color: #b3c3d3; }
  .travel { width: 56px; height: 28px; margin: -2px 18px 0 0; }
  .address { flex: 1; display: flex; align-items: center; height: 23px; gap: 7px; padding-left: 6px; background: #ebf2fa; border: 1px solid #9ab4d1; }
  .inactive .address { background: #f4f8fc; border-color: #b2c4d6; }
  .address span { margin: 0 3px; }
  .tools { display: flex; gap: 7px; padding: 0 0 0 7px; }
  .tools button, .ctools button { display: flex; align-items: center; }
  .tools .caret { margin-left: 6px; }
  .tools i { width: 1px; height: 13px; margin: 3px -2px 0 0; background: #eef4fa; }
  .menu { display: flex; align-items: center; height: 25px; flex: none; padding-left: 15px; gap: 18px; background: linear-gradient(#fff, #e3e3e5); border-bottom: 1px solid #f7f7f7; }

  .body { flex: 1; min-height: 0; display: grid; grid-template-columns: 200px minmax(0, 1fr) 200px; gap: 6px; padding: 0 1px 1px; }
  .panel { border: 1px solid #999; background: #fff; display: flex; flex-direction: column; min-height: 0; min-width: 0; }
  .panel h2 { height: 23px; padding-left: 7px; font-size: 12px; line-height: 24px; font-weight: 700; background: #bab7ba; color: #000; }
  .ctools { display: flex; align-items: center; height: 25px; padding-left: 2px; background: linear-gradient(#fcfcfc, #e4e3e5); border-bottom: 1px solid #47456e; }
  .ctools .caret { margin: 0 7px 0 3px; }
  .ctools i { width: 1px; height: 16px; margin: 0 5px 0 7px; background: #c9c7b4; }
  .tree { flex: 1; list-style: none; }
  .tree li { position: relative; display: flex; height: 18px; }
  .l0 { padding-left: 5px; } .l1 { padding-left: 24px; } .l2 { padding-left: 43px; }
  .twist { position: relative; display: flex; align-items: center; width: 15px; flex: none; color: #333; }
  .twist.closed { color: #a6a6a6; }
  .twist.corner::before, .twist.tee::before { content: ""; position: absolute; left: 5px; right: -2px; top: 10px; border-top: 1px dotted #777; }
  .twist.corner::after { content: ""; position: absolute; left: 5px; top: 10px; bottom: -2px; border-left: 1px dotted #777; }
  .twist.tee::after { content: ""; position: absolute; left: 5px; top: -1px; bottom: -1px; border-left: 1px dotted #777; }
  .node { display: flex; align-items: center; gap: 5px; padding-left: 2px; flex: 1; min-width: 0; overflow: hidden; white-space: nowrap; }
  .node.active { background: #d9d9d9; }
  .treemark { left: 14px; right: -5px; top: -6px; bottom: -6px; }

  .bar { display: flex; background: #f0f0f0; color: #555; }
  .bar button { display: flex; align-items: center; justify-content: center; width: 17px; height: 17px; flex: none; }
  .bar .track { flex: 1; display: flex; }
  .bar .thumb { background: #cdcdcd; }
  .h { height: 16px; } .h button { height: 16px; }
  .tbar .thumb { width: 56%; }
  .lbar .thumb { width: 94%; }
  .v { flex-direction: column; width: 16px; }
  .v button { width: 16px; }
  .v .track { flex-direction: column; }
  .v .track::before { content: ""; height: 18.5%; }
  .v .thumb { height: 72.5%; }

  .centre { display: flex; flex-direction: column; min-height: 0; min-width: 0; }
  .page { flex: 1; padding: 0 12px 13px; }
  .heading { display: flex; align-items: center; height: 51px; gap: 18px; padding-top: 2px; flex: none; }
  .big { width: 32px; height: 32px; }
  h1 { font-size: 19px; line-height: 26px; color: #111; }
  .box { flex: 1; min-height: 0; display: flex; flex-direction: column; border: 1px solid #dcdcdc; }
  .strip { display: flex; align-items: center; height: 29px; flex: none; padding-left: 7px; background: linear-gradient(#fcfcfc, #e3e2e4); border-bottom: 1px solid #47456e; white-space: nowrap; }
  .strip.low { height: 25px; }
  .strip button { display: flex; align-items: center; gap: 3px; margin-left: 4px; }
  .strip i { width: 1px; height: 17px; margin: 0 5px 0 10px; background: #c9c7b4; }
  .strip .dim { color: #888; }
  .go .caret { margin: 0 1px 0 7px; }
  .combo { display: flex; align-items: center; width: 115px; height: 23px; margin-left: 6px; padding: 0 4px; background: #fff; }
  .combo.wide { width: 121px; }
  .combo input, .combo select { flex: 1; min-width: 0; appearance: none; outline: 0; }

  .scroller { position: relative; flex: 1; min-height: 0; display: flex; }
  .clip { flex: 1; min-width: 0; overflow: hidden; }
  .features { margin: -13px 0 0 -1px; }
  .grid { display: grid; grid-template-columns: repeat(auto-fill, 75px); grid-auto-rows: 75px; }
  .item { display: flex; flex-direction: column; align-items: center; gap: 3px; overflow: hidden; }
  .picked { background: #cce8ff; outline: 1px dotted #222; outline-offset: -1px; }
  .label { white-space: pre; text-align: center; }
  h3 { display: flex; align-items: center; height: 24px; padding: 0 9px 2px 13px; gap: 4px; color: #1e3287; font-size: 12px; line-height: 15px; }
  h3::after { content: ""; flex: 1; height: 1px; background: #c3d0ec; order: 1; }
  .fold { width: 8px; height: 5px; order: 2; margin-left: 4px; }
  .itemmark { left: -7px; top: 229px; width: 87px; height: 87px; }

  .tabs { display: flex; align-items: center; padding: 3px 0 4px 6px; flex: none; }
  .tabs button { display: flex; align-items: center; gap: 3px; height: 20px; padding: 0 5px 0 1px; border: 1px solid transparent; }
  .tabs .on { border-color: #1883d7; background: #fff; }

  .actions { background: linear-gradient(100deg, #fdfdfd, #e9e9e9); }
  .alist { padding: 5px 4px 0 5px; }
  .act { display: flex; gap: 8px; min-height: 20px; align-items: center; color: #3494d6; }
  .act a { color: inherit; text-decoration: none; }
  .act.head { color: #000; font-weight: 700; }
  .act.off { color: #9b9b9b; }
  .aicon { width: 16px; flex: none; }
  hr { height: 1px; margin: 1px 0 3px; border: 0; background: linear-gradient(90deg, #ddd, #888 30%, #999); }

  .status { display: flex; align-items: center; height: 23px; flex: none; padding: 0 2px 0 5px; gap: 3px; background: linear-gradient(90deg, #e2e0e1, #f7f7f7); }
  .status span { flex: 1; }
  .grip { width: 10px; height: 10px; margin-top: 6px; }

  .intro { height: 28px; padding: 7px 0 0 3px; white-space: nowrap; flex: none; }
  .tablearea { position: relative; flex: 1; min-height: 0; overflow: hidden; background: linear-gradient(90deg, #f7f7f7 99px, #e4edf6 99px 100px, #fff 100px 219px, #e4edf6 219px 220px, #fff 220px); }
  table { width: 100%; table-layout: fixed; border-collapse: collapse; }
  th, td { padding: 0 0 0 6px; text-align: left; font-weight: 400; white-space: nowrap; overflow: hidden; }
  th { height: 25px; background: #fff; border-right: 1px solid #e3e3e3; }
  th:last-child { border: 0; }
  .c1 { width: 100px; } .c2 { width: 120px; }
  td { height: 19px; }
  .path { text-align: right; padding-right: 4px; }
  .path.short { padding-right: 17px; }
  .sort { position: absolute; left: 47px; top: 1px; width: 8px; height: 5px; }

  .dialog { position: absolute; left: 306px; top: 214px; width: 415px; z-index: 2; background: #f0f0f0; border: 1px solid #6d6d6d; color: #000; }
  .dialog header { display: flex; align-items: center; height: 30px; padding: 0 1px 0 9px; background: #fff; }
  .dialog header span { flex: 1; }
  .dialog header button { display: flex; align-items: center; justify-content: center; width: 45px; height: 30px; }
  .dialog .q { font-size: 14px; }
  .fields { display: flex; flex-direction: column; padding: 15px 17px 14px 14px; }
  .fields > label { height: 17px; padding-left: 3px; }
  .line { position: relative; display: flex; gap: 7px; height: 23px; margin-bottom: 9px; }
  .line input { flex: 1; min-width: 0; height: 23px; padding: 0 2px; border: 1px solid #7a7a7a; background: #fff; outline: 0; }
  .line .focus { border-color: #0078d7; }
  .push { background: #e1e1e1; border: 1px solid #adadad; height: 25px; }
  .more { width: 31px; }
  .cursor { position: absolute; left: 71px; top: 4px; width: 1px; height: 15px; background: #000; }
  .pathmark { left: 142px; top: -7px; width: 126px; height: 37px; }
  .check { position: relative; display: flex; align-items: center; gap: 6px; height: 15px; }
  .check input { position: relative; width: 13px; height: 13px; appearance: none; border: 1px solid #333; background: #fff; }
  .check input:checked::after { content: ""; position: absolute; left: 4px; top: 0; width: 4px; height: 8px; border: solid #333; border-width: 0 1px 1px 0; transform: rotate(42deg); }
  .checkmark { left: -6px; top: -7px; width: 202px; height: 29px; }
  .buttons { display: flex; justify-content: flex-end; gap: 10px; margin: 41px -2px 0 0; }
  .ok { width: 91px; border: 2px solid #0078d7; }
  .cancel { width: 97px; }
</style>
